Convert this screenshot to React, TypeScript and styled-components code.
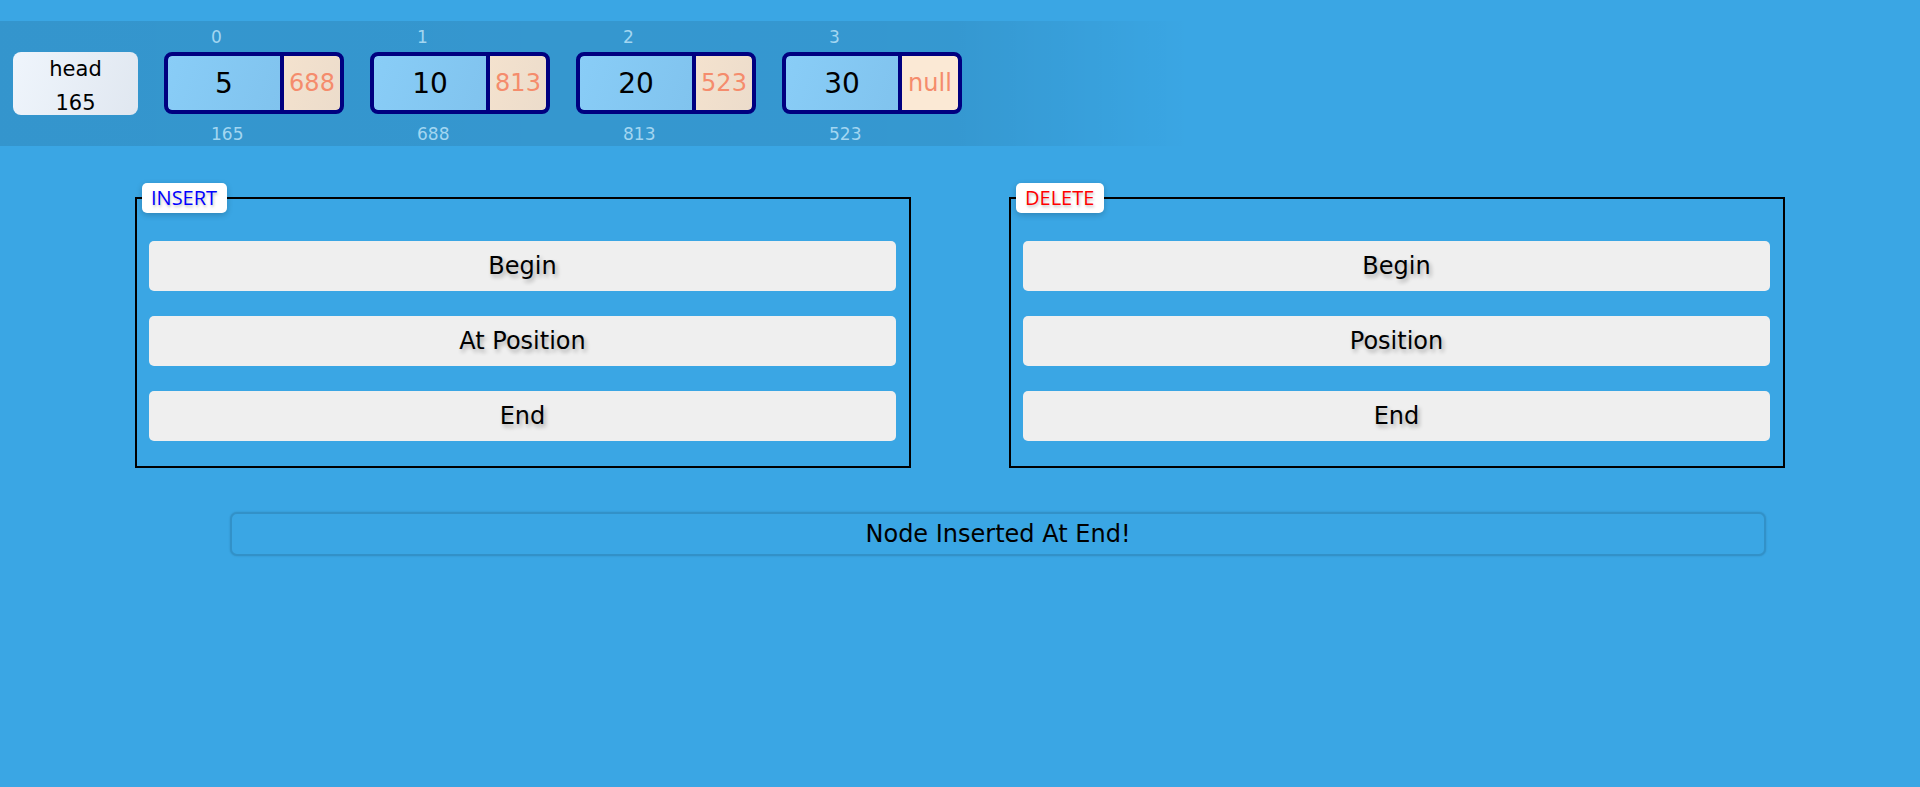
import React from "react";
import styled, { createGlobalStyle } from "styled-components";

const GlobalStyle = createGlobalStyle`
    html, body {
        margin: 0;
        padding: 0;
        background: #3aa6e4;
        min-height: 100%;
    }

    body {
        font-family: "DejaVu Sans", "Liberation Sans", sans-serif;
        color: #000000;
    }
`;

/** The whole page */
const Page = styled.div`
    min-height: 787px;
    padding-top: 21px;
    box-sizing: border-box;
`;

/** The shaded strip that shows the list */
const ListStrip = styled.div`
    display: flex;
    align-items: flex-start;
    gap: 26px;

    width: 1190px;
    height: 125px;
    padding: 6px 0 0 13px;
    box-sizing: border-box;

    background: linear-gradient(90deg, rgba(0, 0, 0, 0.1) 0%, rgba(0, 0, 0, 0.085) 80%, rgba(0, 0, 0, 0.03) 93%, rgba(0, 0, 0, 0) 100%);
`;

/** The head pointer box */
const HeadBox = styled.div`
    display: flex;
    flex-direction: column;
    align-items: center;
    justify-content: center;

    width: 125px;
    height: 63px;
    margin-top: 25px;
    padding-top: 4px;
    box-sizing: border-box;

    border-radius: 8px;
    background: linear-gradient(110deg, #eff5fc 0%, #e0e7f0 100%);

    font-size: 21px;
    line-height: 34px;
`;

/** One node with its index and address */
const NodeColumn = styled.div`
    display: flex;
    flex-direction: column;
    width: 180px;
`;

/** Small faded text over and under a node */
const NodeLabel = styled.div`
    height: 20px;
    padding-left: 47px;

    color: #a3d6f1;
    font-size: 17px;
    line-height: 20px;
`;

/** The bordered node box */
const NodeBox = styled.div`
    display: flex;
    gap: 4px;
    height: 62px;
    margin: 5px 0 10px;

    border: 4px solid #000080;
    border-radius: 8px;
    box-sizing: border-box;
    overflow: hidden;
    background: #000080;
`;

/** The data half of a node */
const DataCell = styled.div`
    display: flex;
    align-items: center;
    justify-content: center;

    width: 112px;
    border-radius: 4px 0 0 4px;
    background: linear-gradient(110deg, #89cdf7 0%, #80c3ee 100%);

    font-size: 28px;
`;

interface INextCellProps {
    /** If the pointer is null */
    empty: boolean;
}

/** The pointer half of a node */
const NextCell = styled.div<INextCellProps>`
    display: flex;
    align-items: center;
    justify-content: center;

    flex: 1;
    border-radius: 0 4px 4px 0;
    background: ${props => props.empty ? "#fbe9d5" : "linear-gradient(110deg, #f4e2ce 0%, #ecdccb 100%)"};

    color: #f58c6c;
    font-size: 24px;
`;

/** The row of operation panels */
const PanelRow = styled.div`
    display: flex;
    gap: 98px;
    padding-left: 135px;
    margin-top: 37px;
`;

/** One operation panel */
const Panel = styled.fieldset`
    width: 776px;
    margin: 0;
    padding: 28px 13px 25px 12px;
    box-sizing: border-box;

    display: flex;
    flex-direction: column;
    gap: 25px;

    border: 2px solid #000000;
`;

interface ILegendProps {
    /** The colour of the legend text */
    tone: string;
}

/** The title badge on a panel */
const PanelLegend = styled.legend<ILegendProps>`
    margin-left: -7px;
    padding: 0 10px 0 9px;
    height: 30px;
    box-sizing: border-box;

    background: #ffffff;
    border-radius: 5px;
    box-shadow: 0 2px 6px rgba(0, 0, 0, 0.2);

    color: ${props => props.tone};
    font-family: "Open Sans", "Liberation Sans", sans-serif;
    font-size: 20px;
    line-height: 30px;
    text-shadow: 1px 2px 3px rgba(0, 0, 0, 0.25);
`;

/** An action button in a panel */
const ActionButton = styled.button`
    display: block;
    width: 100%;
    height: 50px;
    padding: 0;

    border: none;
    border-radius: 5px;
    background: #efefef;

    font-family: inherit;
    font-size: 24px;
    line-height: 48px;
    color: #000000;
    text-shadow: 2px 3px 4px rgba(0, 0, 0, 0.3);
    cursor: pointer;
`;

/** The message bar under the panels */
const StatusBar = styled.div`
    width: 1536px;
    height: 44px;
    margin: 44px 0 0 230px;
    box-sizing: border-box;

    display: flex;
    align-items: center;
    justify-content: center;

    border: 2px solid rgba(0, 0, 0, 0.12);
    border-radius: 7px;
    box-shadow: 0 0 2px rgba(0, 0, 0, 0.15);

    font-size: 24px;
`;

const nodes = [
    { value: 5, next: "688", address: 165 },
    { value: 10, next: "813", address: 688 },
    { value: 20, next: "523", address: 813 },
    { value: 30, next: "null", address: 523 }
];

export default function App() {
    return (
        <Page>
            <GlobalStyle />
            <ListStrip>
                <HeadBox>
                    <span>head</span>
                    <span>165</span>
                </HeadBox>
                {nodes.map((node, i) => (
                    <NodeColumn key={node.address}>
                        <NodeLabel>{i}</NodeLabel>
                        <NodeBox>
                            <DataCell>{node.value}</DataCell>
                            <NextCell empty={node.next === "null"}>{node.next}</NextCell>
                        </NodeBox>
                        <NodeLabel>{node.address}</NodeLabel>
                    </NodeColumn>
                ))}
            </ListStrip>

            <PanelRow>
                <Panel>
                    <PanelLegend tone="#0000ff">INSERT</PanelLegend>
                    <ActionButton>Begin</ActionButton>
                    <ActionButton>At Position</ActionButton>
                    <ActionButton>End</ActionButton>
                </Panel>
                <Panel>
                    <PanelLegend tone="#ff0000">DELETE</PanelLegend>
                    <ActionButton>Begin</ActionButton>
                    <ActionButton>Position</ActionButton>
                    <ActionButton>End</ActionButton>
                </Panel>
            </PanelRow>

            <StatusBar>Node Inserted At End!</StatusBar>
        </Page>
    );
}
